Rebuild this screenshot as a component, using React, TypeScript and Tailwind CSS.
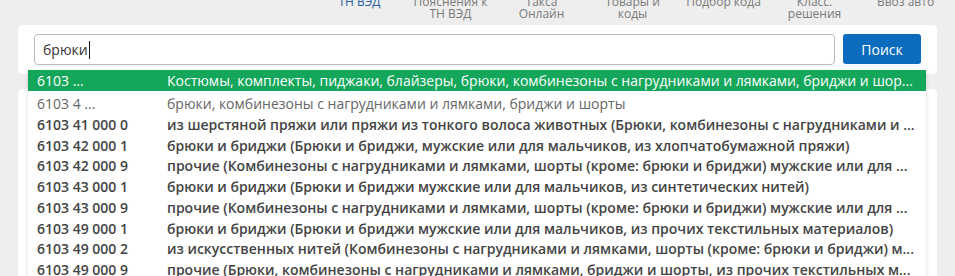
const navItems = [
  { lines: ['ТН ВЭД'], active: true },
  { lines: ['Пояснения к', 'ТН ВЭД'] },
  { lines: ['Такса', 'Онлайн'] },
  { lines: ['Товары и', 'коды'] },
  { lines: ['Подбор кода'] },
  { lines: ['Класс.', 'решения'] },
  { lines: ['Ввоз авто'] },
];

// kind: group = selected heading, sub = subgroup (light), leaf = full code
const results = [
  { code: '6103 ...', text: 'Костюмы, комплекты, пиджаки, блайзеры, брюки, комбинезоны с нагрудниками и лямками, бриджи и шор...', kind: 'group' },
  { code: '6103 4 ...', text: 'брюки, комбинезоны с нагрудниками и лямками, бриджи и шорты', kind: 'sub' },
  { code: '6103 41 000 0', text: 'из шерстяной пряжи или пряжи из тонкого волоса животных (Брюки, комбинезоны с нагрудниками и ...', kind: 'leaf' },
  { code: '6103 42 000 1', text: 'брюки и бриджи (Брюки и бриджи, мужские или для мальчиков, из хлопчатобумажной пряжи)', kind: 'leaf' },
  { code: '6103 42 000 9', text: 'прочие (Комбинезоны с нагрудниками и лямками, шорты (кроме: брюки и бриджи) мужские или для ...', kind: 'leaf' },
  { code: '6103 43 000 1', text: 'брюки и бриджи (Брюки и бриджи мужские или для мальчиков, из синтетических нитей)', kind: 'leaf' },
  { code: '6103 43 000 9', text: 'прочие (Комбинезоны с нагрудниками и лямками, шорты (кроме: брюки и бриджи) мужские или для ...', kind: 'leaf' },
  { code: '6103 49 000 1', text: 'брюки и бриджи (Брюки и бриджи мужские или для мальчиков, из прочих текстильных материалов)', kind: 'leaf' },
  { code: '6103 49 000 2', text: 'из искусственных нитей (Комбинезоны с нагрудниками и лямками, шорты (кроме: брюки и бриджи) м...', kind: 'leaf' },
  { code: '6103 49 000 9', text: 'прочие (Брюки, комбинезоны с нагрудниками и лямками, бриджи и шорты, из прочих текстильных м...', kind: 'leaf' },
];

export default function App() {
  return (
    <div className="relative h-[276px] w-[955px] overflow-hidden bg-[#eeeeee] font-['Open_Sans',sans-serif]">
      {/* Top nav */}
      <nav className="-mt-[4px] ml-[314px] flex">
        {navItems.map((item, i) => (
          <div
            key={i}
            className={`w-[91px] text-center text-[12px] leading-[12px] ${
              item.active ? 'text-[#2b5f9e]' : 'text-[#7a7a7a]'
            }`}
          >
            {item.lines.map((l, j) => (
              <div key={j}>{l}</div>
            ))}
          </div>
        ))}
      </nav>

      {/* Search card */}
      <div className="mx-[18px] mt-[5px] flex h-[49px] items-start gap-2 rounded bg-white px-4 pt-[9px]">
        <div className="flex h-[31px] flex-1 items-center rounded-sm border border-[#bcbcbc] bg-white pl-[8px] text-[14px] text-[#333]">
          брюки
          <span className="ml-px inline-block h-[18px] w-px bg-[#111]" />
        </div>
        <button className="h-[30px] w-[78px] rounded-[3px] bg-[#0b6cbd] text-[14px] text-white">
          Поиск
        </button>
      </div>

      {/* Content card */}
      <div className="mx-[18px] mt-[15px] h-[200px] rounded bg-white" />

      {/* Autocomplete dropdown */}
      <div className="absolute left-[28px] top-[70px] w-[898px] bg-white shadow-[0_1px_4px_rgba(0,0,0,0.15)]">
        {results.map((r, i) => (
          <div
            key={i}
            className={`flex items-center pl-[9px] pr-[10px] text-[14px] ${
              r.kind === 'group'
                ? 'h-[21px] bg-[#14a75b] text-white'
                : r.kind === 'sub'
                  ? 'mt-[2px] h-[20.8px] text-[#666]'
                  : 'h-[20.8px] font-semibold text-[#444]'
            }`}
          >
            <span className="w-[130px] shrink-0 whitespace-nowrap">{r.code}</span>
            <span className="min-w-0 flex-1 overflow-hidden whitespace-nowrap">{r.text}</span>
          </div>
        ))}
      </div>
    </div>
  );
}
